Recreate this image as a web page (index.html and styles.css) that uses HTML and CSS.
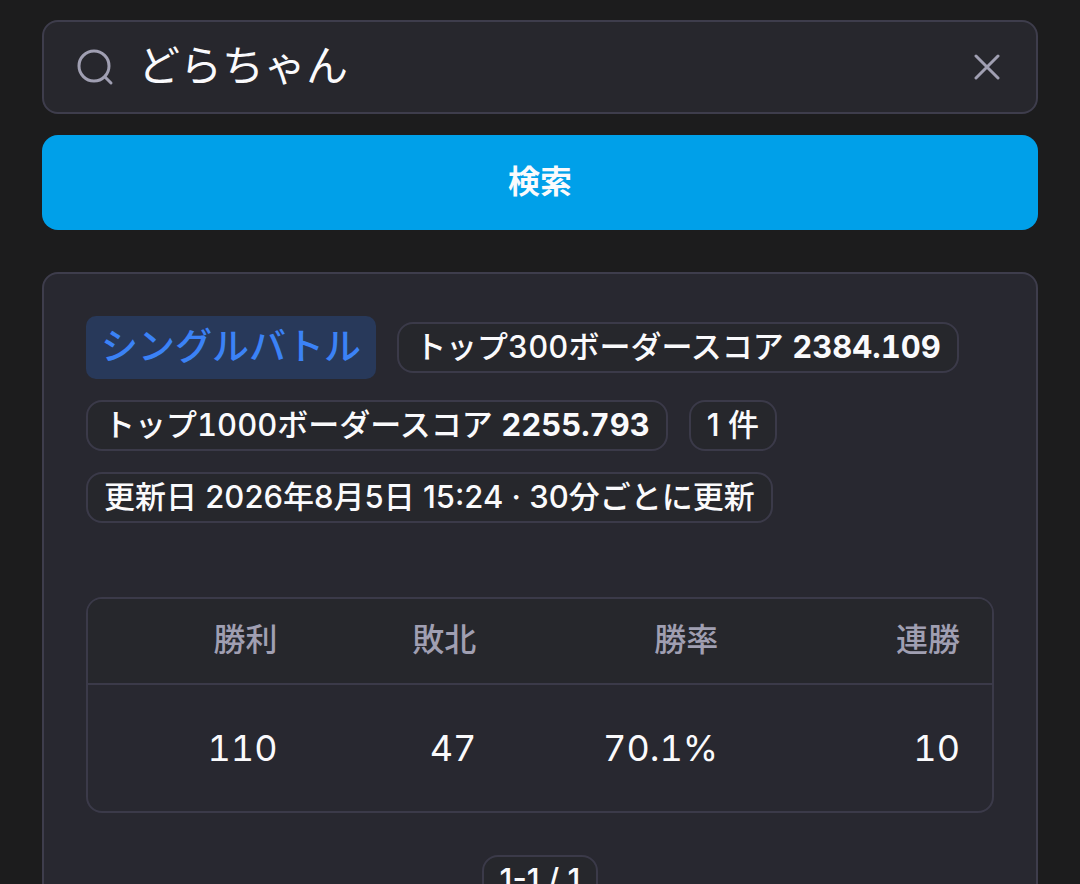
FILE: index.html
```
<!DOCTYPE html>
<html lang="ja">
<head>
  <meta charset="UTF-8">
  <meta name="viewport" content="width=device-width, initial-scale=1">
  <title>シングルバトル</title>
  <link rel="stylesheet" href="styles.css">
</head>
<body>
  <main class="container">
    <!-- 検索フォーム -->
    <form class="search-form">
      <div class="search-box">
        <svg class="search-icon" viewBox="0 0 38 38" aria-hidden="true">
          <circle cx="18" cy="18" r="15"/>
          <path d="M29 29l6 6"/>
        </svg>
        <input class="search-input" type="text" value="どらちゃん" aria-label="トレーナー名">
        <button class="clear-button" type="button" aria-label="クリア">
          <svg class="clear-icon" viewBox="0 0 26 26" aria-hidden="true">
            <path d="M2 2l22 22M24 2L2 24"/>
          </svg>
        </button>
      </div>
      <button class="search-button" type="submit">検索</button>
    </form>

    <!-- 検索結果 -->
    <section class="card">
      <div class="badges">
        <h2 class="rule-tag">シングルバトル</h2>
        <span class="pill tabular">トップ300ボーダースコア <strong>2384.109</strong></span>
        <span class="pill tabular">トップ1000ボーダースコア <strong>2255.793</strong></span>
        <span class="pill">1 件</span>
        <span class="pill">更新日 2026年8月5日 15:24 · 30分ごとに更新</span>
      </div>

      <div class="table-wrap">
        <table class="result-table">
          <colgroup>
            <col class="col-win">
            <col class="col-lose">
            <col>
            <col>
          </colgroup>
          <thead>
            <tr>
              <th scope="col">勝利</th>
              <th scope="col">敗北</th>
              <th scope="col">勝率</th>
              <th scope="col">連勝</th>
            </tr>
          </thead>
          <tbody>
            <tr>
              <td>110</td>
              <td>47</td>
              <td>70.1%</td>
              <td>10</td>
            </tr>
          </tbody>
        </table>
      </div>

      <div class="pager">
        <span class="pill">1-1 / 1</span>
      </div>
    </section>
  </main>
</body>
</html>
```
FILE: styles.css
```
* {
  box-sizing: border-box;
}
body {
  margin: 0;
  background-color: #1c1c1d;
  color: #fafafc;
  font-family: Inter, "Noto Sans CJK JP", sans-serif;
  font-size: 31px;
}
button,
input {
  font-family: inherit;
  color: inherit;
}
.container {
  padding: 20px 42px;
}

/* 検索フォーム */
.search-form {
  display: flex;
  flex-direction: column;
  gap: 21px;
  margin-bottom: 42px;
}
.search-box {
  display: flex;
  align-items: center;
  padding: 0 32px;
  height: 94px;
  background-color: #27272d;
  border: 2px solid #3e3d4c;
  border-radius: 16px;
}
.search-icon {
  flex: none;
  width: 38px;
  height: 38px;
  fill: none;
  stroke: #a09fb2;
  stroke-width: 3;
  stroke-linecap: round;
}
.search-input {
  flex: 1;
  min-width: 0;
  padding: 0 24px 10px;
  background: none;
  border: none;
  outline: none;
  font-size: 42px;
}
.clear-button {
  display: flex;
  padding: 4px;
  background: none;
  border: none;
  cursor: pointer;
}
.clear-icon {
  width: 26px;
  height: 26px;
  fill: none;
  stroke: #a09fb2;
  stroke-width: 3;
  stroke-linecap: round;
}
.search-button {
  height: 95px;
  padding: 0 32px 8px;
  background-color: #00a0e9;
  border: none;
  border-radius: 16px;
  font-size: 32px;
  font-weight: 600;
  cursor: pointer;
}

/* 結果カード */
.card {
  padding: 42px;
  background-color: #282830;
  border: 2px solid #3e3d4c;
  border-radius: 16px;
}
.badges {
  display: flex;
  flex-wrap: wrap;
  align-items: center;
  gap: 21px;
  margin-bottom: 74px;
}
.rule-tag {
  margin: 0;
  padding: 7px 15px 8px;
  background-color: #28395a;
  border-radius: 10px;
  color: #3b82f6;
  font-size: 37px;
  font-weight: 500;
  line-height: 48px;
}
.pill {
  padding: 0 16px 2px;
  background-color: #26272c;
  border: 2px solid #3b3a49;
  border-radius: 16px;
  font-weight: 500;
  line-height: 45px;
}
.pill strong {
  font-weight: 700;
}
.tabular {
  font-variant-numeric: tabular-nums;
}

/* 戦績テーブル */
.table-wrap {
  background-color: #282830;
  border: 2px solid #3b3a49;
  border-radius: 16px;
  overflow: hidden;
}
.result-table {
  width: 100%;
  table-layout: fixed;
  border-collapse: collapse;
  text-align: right;
}
.col-win {
  width: 24.5%;
}
.col-lose {
  width: 22%;
}
.result-table th {
  padding: 19px 32px 21px;
  background-color: #26272c;
  border-bottom: 2px solid #3b3a49;
  color: #a09fb2;
  font-size: 32px;
  font-weight: 500;
  line-height: 44px;
}
.result-table td {
  padding: 37px 32px;
  font-size: 36px;
  line-height: 52px;
  font-variant-numeric: tabular-nums;
}
.pager {
  display: flex;
  justify-content: center;
  margin-top: 42px;
}
```
